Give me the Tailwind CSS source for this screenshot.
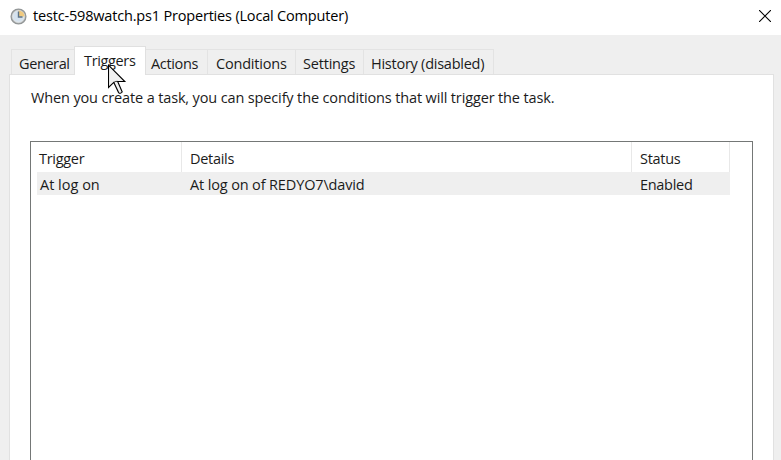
<!DOCTYPE html>
<html lang="en">
<head>
<meta charset="utf-8">
<title>testc-598watch.ps1 Properties (Local Computer)</title>
<script src="https://cdn.jsdelivr.net/npm/@tailwindcss/browser@4"></script>
</head>
<body class="relative flex h-[460px] w-[781px] flex-col overflow-hidden bg-[#efefef] font-['Open_Sans','Noto_Sans',sans-serif] text-[14.5px] leading-5 text-[#1b1b1b] whitespace-nowrap">
<header class="flex h-[35px] shrink-0 items-center bg-white pr-[10px] pb-[3px] pl-[10px] text-black">
  <svg class="mt-px h-[17px] w-[17px]" viewBox="0 0 17 17">
    <circle cx="8.5" cy="8.5" r="7.4" fill="#c3c6c7" stroke="#929697" stroke-width="1.3"/>
    <circle cx="8.5" cy="8.5" r="5.7" fill="#d5e2ee" stroke="#e9eced" stroke-width=".7"/>
    <path d="M8.5 8.5V2.4A6.1 6.1 0 0 1 14.6 8.5Z" fill="#f0ca80"/>
    <path d="M8.5 3.5V9H12.5" fill="none" stroke="#5d7386" stroke-width="1.4"/>
  </svg>
  <h1 class="ml-[6px] tracking-[-0.18px]">testc-598watch.ps1 Properties (Local Computer)</h1>
  <svg class="ml-auto h-[12px] w-[12px]" viewBox="0 0 12 12"><path d="M0 0L12 12M12 0L0 12" stroke="#000" stroke-width="1.1"/></svg>
</header>
<nav class="relative z-10 flex h-[39px] shrink-0 items-end pl-[11px]">
  <div class="h-[25px] w-[63px] border-t border-l border-[#e3e3e3] pt-[4px] pl-[7px] tracking-[-0.4px]">General</div>
  <div class="-mb-px h-[29px] w-[72px] border border-b-0 border-[#e0e0e0] bg-white pt-[4px] pl-[9px] tracking-[-0.35px]">Triggers</div>
  <div class="h-[25px] w-[62px] border-t border-r border-[#e3e3e3] pt-[4px] pl-[5px] tracking-[-0.35px]">Actions</div>
  <div class="h-[25px] w-[88px] border-t border-r border-[#e3e3e3] pt-[4px] pl-[8px] tracking-[-0.2px]">Conditions</div>
  <div class="h-[25px] w-[68px] border-t border-r border-[#e3e3e3] pt-[4px] pl-[7px] tracking-[-0.2px]">Settings</div>
  <div class="h-[25px] w-[130px] border-t border-r border-[#e3e3e3] pt-[4px] pl-[7px] tracking-[-0.25px]">History (disabled)</div>
</nav>
<main class="mr-[7px] ml-[9px] flex min-h-0 grow flex-col border border-b-0 border-[#e1e1e1] bg-white pr-[20px] pl-[20px]">
  <p class="mt-[13px] shrink-0 pl-px tracking-[-0.14px]">When you create a task, you can specify the conditions that will trigger the task.</p>
  <section class="mt-[33px] grow border border-b-0 border-[#747776] pl-[6px]">
    <div class="grid h-[30px] w-[693px] grid-cols-[145px_450px_98px]">
      <div class="border-r border-[#e8e8e8] pt-[7px] pl-[2px] tracking-[-0.3px]">Trigger</div>
      <div class="border-r border-[#e8e8e8] pt-[7px] pl-[8px] tracking-[-0.3px]">Details</div>
      <div class="border-r border-[#e8e8e8] pt-[7px] pl-[8px] tracking-[-0.3px]">Status</div>
    </div>
    <div class="grid h-[23px] w-[693px] grid-cols-[145px_450px_98px] bg-[#efefef]">
      <div class="pt-[3px] pl-[3px]">At log on</div>
      <div class="pt-[3px] pl-[8px] tracking-[-0.14px]">At log on of REDYO7\david</div>
      <div class="pt-[3px] pl-[8px] tracking-[-0.3px]">Enabled</div>
    </div>
  </section>
</main>
<svg class="absolute top-[64px] left-[108px] z-20 h-[31px] w-[19px]" viewBox="0 0 19 31">
  <path d="M.5 1.2V23.5L5.8 18.4L10.6 28.6Q12.2 30.2 14.2 28L9.7 17.5H16.8Z" fill="#f1f1f1" stroke="#000" stroke-width="1.1"/>
  <path d="M5.8 18.4L7.8 17.4H9.7" fill="none" stroke="#000" stroke-width=".8"/>
</svg>
</body>
</html>
